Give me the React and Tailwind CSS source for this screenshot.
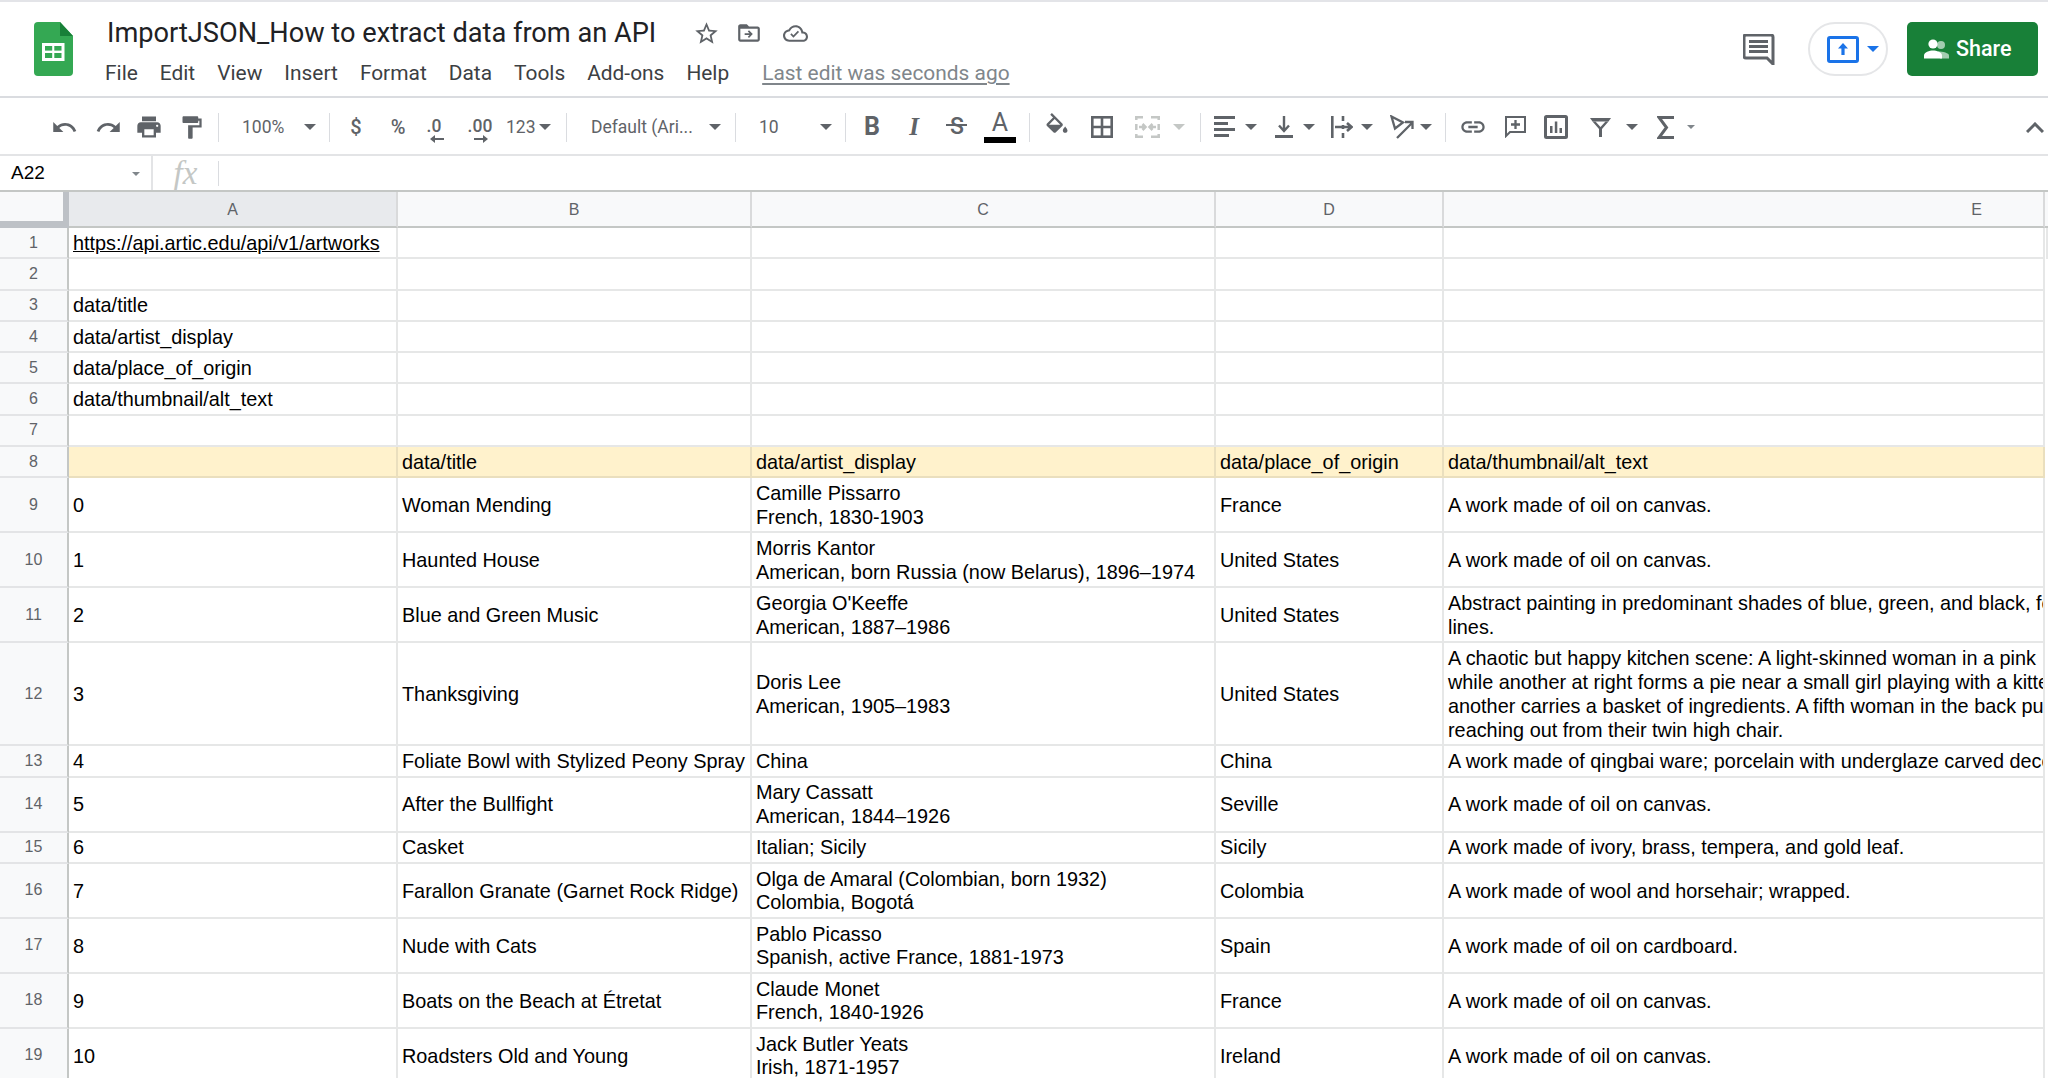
const G = "#5f6368";

function I({ children, w = 24, h = 24, vb = "0 0 24 24", cls = "" }) {
  return (
    <svg width={w} height={h} viewBox={vb} fill={G} className={cls}>
      {children}
    </svg>
  );
}

function Caret({ small, light, blue }) {
  const color = blue ? "border-t-[#1a73e8]" : light ? "border-t-[#c4c7c5]" : small ? "border-t-[#80868b]" : "border-t-[#5f6368]";
  const size = small
    ? "border-l-[4px] border-r-[4px] border-t-[4px]"
    : "border-l-[6px] border-r-[6px] border-t-[6px]";
  return <div className={`${size} border-l-transparent border-r-transparent ${color} shrink-0`} />;
}

function Sep() {
  return <div className="w-px h-[29px] bg-[#dadce0] shrink-0" />;
}

const menus = ["File", "Edit", "View", "Insert", "Format", "Data", "Tools", "Add-ons", "Help"];

function Logo() {
  return (
    <svg width="39" height="54" viewBox="0 0 39 54" className="shrink-0">
      <path d="M4 0H26L39 14V50a4 4 0 0 1-4 4H4a4 4 0 0 1-4-4V4a4 4 0 0 1 4-4z" fill="#34a853" />
      <path d="M26 0L39 14H26z" fill="#188038" />
      <rect x="8" y="21" width="22.5" height="18" fill="#fff" />
      <rect x="11" y="24" width="7.2" height="4.6" fill="#34a853" />
      <rect x="20.3" y="24" width="7.2" height="4.6" fill="#34a853" />
      <rect x="11" y="31" width="7.2" height="5" fill="#34a853" />
      <rect x="20.3" y="31" width="7.2" height="5" fill="#34a853" />
    </svg>
  );
}

function Header() {
  return (
    <div className="h-[96px] flex border-b-2 border-[#dadce0] bg-white">
      <div className="pl-[34px] pt-[20px] w-[106px] shrink-0">
        <Logo />
      </div>
      <div className="flex-1 flex flex-col">
        <div className="h-[48px] flex items-end">
          <span className="ml-[1px] text-[27.2px] leading-[34px] text-[#202124] font-['Roboto',sans-serif] whitespace-nowrap">
            ImportJSON_How to extract data from an API
          </span>
          <div className="flex items-center ml-[37px] h-[34px]">
            <I w={27} h={27}>
              <path d="M22 9.24l-7.19-.62L12 2 9.19 8.63 2 9.24l5.46 4.73L5.82 21 12 17.27 18.18 21l-1.63-7.03L22 9.24zM12 15.4l-3.76 2.27 1-4.28-3.32-2.88 4.38-.38L12 6.1l1.71 4.04 4.38.38-3.32 2.88 1 4.28L12 15.4z" />
            </I>
            <I w={26} h={26} cls="ml-[16px]">
              <path d="M20 6h-8l-2-2H4c-1.1 0-2 .9-2 2v12c0 1.1.9 2 2 2h16c1.1 0 2-.9 2-2V8c0-1.1-.9-2-2-2zm0 12H4V8h16v10z" />
              <path d="M12 9.5l3.5 3.5-3.5 3.5-1.1-1.1 1.6-1.6H8v-1.6h4.5l-1.6-1.6z" />
            </I>
            <I w={25} h={25} cls="ml-[21px]">
              <path d="M19.35 10.04C18.67 6.59 15.64 4 12 4 9.11 4 6.6 5.64 5.35 8.04 2.34 8.36 0 10.91 0 14c0 3.31 2.69 6 6 6h13c2.76 0 5-2.24 5-5 0-2.64-2.05-4.78-4.65-4.96zM19 18H6c-2.21 0-4-1.79-4-4 0-2.05 1.53-3.76 3.56-3.97l1.07-.11.5-.95C8.08 7.14 9.94 6 12 6c2.62 0 4.88 1.86 5.39 4.43l.3 1.5 1.53.11c1.56.1 2.78 1.41 2.78 2.96 0 1.65-1.35 3-3 3z" />
              <path d="M10 16l-3-3 1.2-1.2 1.8 1.8 4.2-4.2 1.2 1.2z" />
            </I>
          </div>
        </div>
        <div className="flex items-center h-[36px] mt-[6px] -ml-[1px] gap-[22px] text-[20.9px] text-[#3c4043] font-['Roboto',sans-serif] whitespace-nowrap">
          {menus.map((m) => (
            <span key={m}>{m}</span>
          ))}
          <span className="ml-[11px] text-[#80868b] underline underline-offset-[3px]">Last edit was seconds ago</span>
        </div>
      </div>
      <div className="flex items-start pt-[20px] pr-[10px] shrink-0">
        <svg width="32" height="31" viewBox="0 0 32 31" className="mt-[12px] mr-[33px]">
          <path d="M3 1H28a2 2 0 0 1 2 2V30L24 24H3a2 2 0 0 1-2-2V3a2 2 0 0 1 2-2z" fill="none" stroke={G} strokeWidth="3" />
          <rect x="6" y="6" width="19" height="3" fill={G} />
          <rect x="6" y="11" width="19" height="3" fill={G} />
          <rect x="6" y="16" width="19" height="3" fill={G} />
        </svg>
        <div className="w-[80px] h-[54px] rounded-[27px] border-2 border-[#e5e6e8] flex items-center pl-[17px] gap-[8px] mr-[19px]">
          <svg width="32" height="27" viewBox="0 0 32 27">
            <rect x="1.5" y="1.5" width="29" height="24" rx="1.5" fill="none" stroke="#1a73e8" strokeWidth="3" />
            <path d="M16 7l5 5.5h-3.4V19h-3.2v-6.5H11z" fill="#1a73e8" />
          </svg>
          <Caret blue />
        </div>
        <div className="w-[131px] h-[54px] rounded-[5px] bg-[#188038] flex items-center pl-[17px] gap-[7px] text-white text-[21.5px] font-medium font-['Roboto',sans-serif]">
          <svg width="25" height="20" viewBox="0 0 25 20">
            <circle cx="17" cy="6" r="4" fill="#a3cdb0" />
            <path d="M14 12.5c5 0 11 1.500 11 4v3H16z" fill="#a3cdb0" />
            <circle cx="9" cy="5" r="4.600" fill="#fff" />
            <path d="M0 19.500v-3c0-3.200 5.500-5 9-5s9 1.800 9 5v3z" fill="#fff" />
          </svg>
          <span>Share</span>
        </div>
      </div>
    </div>
  );
}

function Box({ cls, children }) {
  return <div className={`flex items-center justify-center shrink-0 ${cls}`}>{children}</div>;
}

const tbText = "text-[#5f6368] font-['Roboto',sans-serif] whitespace-nowrap";

function Toolbar() {
  return (
    <div className="h-[58px] flex items-center pl-[42px] pt-[2px] border-b-2 border-[#e3e4e6] bg-white">
      <Box cls="w-[44px]">
        <I w={27} h={27}><path d="M12.5 8c-2.65 0-5.05.99-6.9 2.6L2 7v9h9l-3.62-3.62c1.39-1.16 3.16-1.88 5.12-1.88 3.54 0 6.55 2.31 7.6 5.5l2.37-.78C21.08 11.03 17.15 8 12.5 8z" /></I>
      </Box>
      <Box cls="w-[44px]">
        <I w={27} h={27}><path d="M18.4 10.6C16.55 8.99 14.15 8 11.5 8c-4.65 0-8.58 3.03-9.96 7.22L3.9 16c1.05-3.19 4.05-5.5 7.6-5.5 1.95 0 3.73.72 5.12 1.88L13 16h9V7l-3.6 3.6z" /></I>
      </Box>
      <Box cls="w-[38px]">
        <I w={28} h={28}><path d="M19 8H5c-1.66 0-3 1.34-3 3v6h4v4h12v-4h4v-6c0-1.66-1.34-3-3-3zm-3 11H8v-5h8v5zm3-7c-.55 0-1-.45-1-1s.45-1 1-1 1 .45 1 1-.45 1-1 1zm-1-9H6v4h12V3z" /></I>
      </Box>
      <Box cls="w-[46px]">
        <I w={27} h={27}><path d="M18 4V3c0-.55-.45-1-1-1H5c-.55 0-1 .45-1 1v4c0 .55.45 1 1 1h12c.55 0 1-.45 1-1V6h1v4H9v11c0 .55.45 1 1 1h2c.55 0 1-.45 1-1v-9h8V4h-3z" /></I>
      </Box>
      <div className="w-[4px] shrink-0" />
      <Sep />
      <div className={`w-[110px] shrink-0 flex items-center justify-between pl-[23px] pr-[13px] text-[17.5px] ${tbText}`}>
        <span>100%</span>
        <Caret />
      </div>
      <Sep />
      <Box cls={`w-[52px] text-[20px] font-medium ${tbText}`}>$</Box>
      <Box cls={`w-[32px] text-[20px] font-medium ${tbText}`}>%</Box>
      <Box cls={`w-[40px] relative text-[17.5px] font-medium ${tbText}`}>
        <span className="-mt-[2px]">.0</span>
        <svg width="14" height="8" viewBox="0 0 14 8" className="absolute left-[16px] top-[20px]">
          <path d="M0 4l5-4v3h9v2H5v3z" fill={G} />
        </svg>
      </Box>
      <Box cls={`w-[52px] relative text-[17.5px] font-medium ${tbText}`}>
        <span className="-mt-[2px]">.00</span>
        <svg width="14" height="8" viewBox="0 0 14 8" className="absolute left-[20px] top-[20px]">
          <path d="M14 4L9 0v3H0v2h9v3z" fill={G} />
        </svg>
      </Box>
      <div className={`w-[60px] shrink-0 flex items-center gap-[3px] text-[17.5px] ${tbText}`}>
        <span>123</span>
        <Caret />
      </div>
      <Sep />
      <div className={`w-[168px] shrink-0 flex items-center justify-between pl-[24px] pr-[14px] text-[17.5px] ${tbText}`}>
        <span>Default (Ari...</span>
        <Caret />
      </div>
      <Sep />
      <div className={`w-[109px] shrink-0 flex items-center justify-between pl-[23px] pr-[13px] text-[17.5px] ${tbText}`}>
        <span>10</span>
        <Caret />
      </div>
      <Sep />
      <Box cls={`w-[52px] text-[25px] font-bold ${tbText}`}>B</Box>
      <Box cls="w-[32px] text-[25px] font-bold italic text-[#5f6368] font-['Liberation_Serif',serif]">I</Box>
      <Box cls={`w-[54px] relative text-[23px] font-medium ${tbText}`}>
        <span>S</span>
        <div className="absolute left-[16px] top-[14px] w-[21px] h-[2px] bg-[#5f6368]" />
      </Box>
      <div className="w-[32px] shrink-0 flex flex-col items-center h-[36px] mt-[2px]">
        <span className={`text-[25px] leading-[26px] ${tbText}`}>A</span>
        <div className="w-[32px] h-[6px] mt-[1px] bg-black" />
      </div>
      <div className="w-[13px] shrink-0" />
      <Sep />
      <Box cls="w-[54px]">
        <I w={28} h={28}>
          <path d="M16.56 8.94L7.62 0 6.21 1.41l2.38 2.38-5.15 5.15c-.59.59-.59 1.54 0 2.12l5.5 5.5c.29.29.68.44 1.06.44s.77-.15 1.06-.44l5.5-5.5c.59-.58.59-1.53 0-2.12zM5.210 10L10 5.21 14.79 10H5.21zM19 11.5s-2 2.17-2 3.500c0 1.1.9 2 2 2s2-.9 2-2c0-1.33-2-3.5-2-3.5z" />
        </I>
      </Box>
      <Box cls="w-[36px]">
        <svg width="22" height="22" viewBox="0 0 22 22" fill="none" stroke={G} strokeWidth="2.600">
          <rect x="1.300" y="1.300" width="19.400" height="19.400" />
          <path d="M11 1V21M1 11H21" />
        </svg>
      </Box>
      <Box cls="w-[54px]">
        <svg width="25" height="22" viewBox="0 0 25 22" fill="none" stroke="#c4c7c5" strokeWidth="2.500">
          <path d="M0 1.300H8M16 1.300H25M0 20.700H8M16 20.700H25M1.300 0V4M1.300 8V14M1.300 18V22M23.700 0V4M23.700 8V14M23.700 18V22M4 11H10M7.500 8L10.500 11L7.500 14M21 11H15M17.500 8L14.500 11L17.500 14" />
        </svg>
      </Box>
      <Box cls="w-[10px]"><Caret light /></Box>
      <div className="w-[16px] shrink-0" />
      <Sep />
      <Box cls="w-[28px] ml-[10px]">
        <svg width="22" height="22" viewBox="0 0 22 22" fill={G}>
          <rect x="0" y="0" width="21" height="3" />
          <rect x="0" y="6" width="14" height="3" />
          <rect x="0" y="12" width="21" height="3" />
          <rect x="0" y="18" width="15" height="3" />
        </svg>
      </Box>
      <Box cls="w-[12px] ml-[6px]"><Caret /></Box>
      <Box cls="w-[28px] ml-[13px]">
        <svg width="18" height="22" viewBox="0 0 18 22" fill="none" stroke={G} strokeWidth="2.400">
          <path d="M9 0V14M4 9.500L9 15L14 9.500" />
          <path d="M0 20.500H18" strokeWidth="3" />
        </svg>
      </Box>
      <Box cls="w-[12px] ml-[5px]"><Caret /></Box>
      <Box cls="w-[28px] ml-[13px]">
        <svg width="22" height="22" viewBox="0 0 22 22" fill="none" stroke={G} strokeWidth="2.600">
          <path d="M1.300 0V22M12 0V5M12 9V13M12 17V22M4 11H20M16 7L20.500 11L16 15" />
        </svg>
      </Box>
      <Box cls="w-[12px] ml-[5px]"><Caret /></Box>
      <Box cls="w-[28px] ml-[15px]">
        <svg width="24" height="24" viewBox="0 0 24 24" fill="none" stroke={G} strokeWidth="2.300">
          <path d="M1.500 1.500L13 7.500L5 13.500z" />
          <path d="M7 23L22 8M15 7H22.500V14" />
        </svg>
      </Box>
      <Box cls="w-[12px] ml-[4px]"><Caret /></Box>
      <div className="w-[13px] shrink-0" />
      <Sep />
      <Box cls="w-[28px] ml-[13px]">
        <I w={30} h={30}><path d="M3.900 12c0-1.710 1.390-3.100 3.100-3.100h4V7H7c-2.760 0-5 2.240-5 5s2.240 5 5 5h4v-1.900H7c-1.710 0-3.100-1.390-3.100-3.100zM8 13h8v-2H8v2zm9-6h-4v1.900h4c1.710 0 3.100 1.390 3.100 3.100s-1.390 3.100-3.100 3.100h-4V17h4c2.760 0 5-2.240 5-5s-2.240-5-5-5z" /></I>
      </Box>
      <Box cls="w-[28px] ml-[14px]">
        <svg width="21" height="22" viewBox="0 0 21 22" fill="none" stroke={G} strokeWidth="2">
          <path d="M1 1H20V16H5L1 20z" />
          <path d="M10.500 4V13M6 8.500H15" strokeWidth="2.300" />
        </svg>
      </Box>
      <Box cls="w-[28px] ml-[13px]">
        <svg width="24" height="24" viewBox="0 0 24 24">
          <rect x="1.500" y="1.500" width="21" height="21" rx="1" fill="none" stroke={G} strokeWidth="3" />
          <rect x="6" y="11" width="2.500" height="7" fill={G} />
          <rect x="10.800" y="6.500" width="2.500" height="11.500" fill={G} />
          <rect x="15.500" y="13" width="2.500" height="5" fill={G} />
        </svg>
      </Box>
      <Box cls="w-[28px] ml-[16px]">
        <svg width="21" height="19" viewBox="0 0 21 19" fill={G}>
          <path d="M0 0H21L18.500 3.500H2.500z" />
          <path d="M2.500 3.500L9 11V19H12V11L18.500 3.500H15.500L10.500 9L5.500 3.500z" />
        </svg>
      </Box>
      <Box cls="w-[12px] ml-[12px]"><Caret /></Box>
      <Box cls="w-[28px] ml-[13px]">
        <svg width="17" height="23" viewBox="0 0 17 23" fill="none" stroke={G} strokeWidth="3">
          <path d="M17 1.500H2L9.500 11.500L2 21.500H17" />
        </svg>
      </Box>
      <Box cls="w-[10px] ml-[7px]"><Caret small /></Box>
      <div className="ml-auto mr-[4px] shrink-0 w-[18px] flex justify-center">
        <svg width="18" height="11" viewBox="0 0 18 11" fill="none" stroke={G} strokeWidth="3">
          <path d="M1 10L9 2L17 10" />
        </svg>
      </div>
    </div>
  );
}

function FormulaBar() {
  return (
    <div className="h-[36px] flex bg-white border-b-2 border-[#c4c7c5] font-['Liberation_Sans',sans-serif]">
      <div className="w-[153px] shrink-0 flex items-center justify-between pl-[11px] pr-[11px] pt-[1px] border-r-2 border-[#e3e4e6] text-[19px] text-black">
        <span>A22</span>
        <Caret small />
      </div>
      <div className="w-[65px] shrink-0 flex items-center justify-center text-[33px] leading-none italic text-[#c4c7c5] font-['Liberation_Serif',serif]">
        fx
      </div>
      <div className="w-px h-[25px] mt-[5px] bg-[#dadce0]" />
    </div>
  );
}

const gridCols = "grid grid-cols-[69px_329px_354px_464px_228px_601px_3px]";

function ColumnHeader() {
  const base = "flex items-center justify-center pt-[1px] border-r-2 border-[#d9dadb] text-[16px] text-[#5f6368]";
  return (
    <div className={`${gridCols} h-[36px] bg-[#f8f9fa] font-['Liberation_Sans',sans-serif]`}>
      <div className="border-r-[6px] border-b-[7px] border-[#bdc1c6] bg-[#f8f9fa]" />
      <div className={`${base} bg-[#e8eaed] border-b-2 border-b-[#c4c7c5]`}>A</div>
      <div className={`${base} border-b-2 border-b-[#c4c7c5]`}>B</div>
      <div className={`${base} border-b-2 border-b-[#c4c7c5]`}>C</div>
      <div className={`${base} border-b-2 border-b-[#c4c7c5]`}>D</div>
      <div className="flex items-center justify-end pt-[1px] pr-[61px] border-r-2 border-[#d9dadb] border-b-2 border-b-[#c4c7c5] text-[16px] text-[#5f6368]">E</div>
      <div className="bg-[#f8f9fa] border-b-2 border-b-[#c4c7c5]" />
    </div>
  );
}

function Cell({ lines, yellow, link }) {
  const border = yellow ? "border-[#eadfbe]" : "border-[#e6e7e7]";
  return (
    <div className={`flex items-center pl-[4px] pt-[2px] overflow-hidden border-r-2 border-b-2 ${border}`}>
      <div className="min-w-0 text-[19.85px] leading-[23.8px] text-black">
        {(lines || []).map((l, i) => (
          <div key={i} className={`whitespace-nowrap ${link ? "underline" : ""}`}>{l}</div>
        ))}
      </div>
    </div>
  );
}

function Row({ n, h, cells = [], yellow, link }) {
  return (
    <div className={`${gridCols} ${h} ${yellow ? "bg-[#fff2cc]" : "bg-white"}`}>
      <div className="flex items-center justify-center bg-[#f8f9fa] border-r-[2px] border-r-[#c4c7c5] border-b-2 border-b-[#e3e4e6] text-[16px] text-[#5f6368]">
        {n}
      </div>
      {[0, 1, 2, 3, 4].map((i) => (
        <Cell key={i} lines={cells[i]} yellow={yellow} link={link && i === 0} />
      ))}
      <div className="bg-white relative">
        {n === 1 ? <div className="absolute left-[1px] top-0 w-[2px] h-[31px] bg-[#e6e7e7]" /> : null}
      </div>
    </div>
  );
}

const S = "h-[31.3px]";
const D = "h-[55px]";
const oil = ["A work made of oil on canvas."];

function Sheet() {
  return (
    <div className="font-['Liberation_Sans',sans-serif]">
      <ColumnHeader />
      <Row n={1} h={S} link cells={[["https://api.artic.edu/api/v1/artworks"]]} />
      <Row n={2} h={S} />
      <Row n={3} h={S} cells={[["data/title"]]} />
      <Row n={4} h={S} cells={[["data/artist_display"]]} />
      <Row n={5} h={S} cells={[["data/place_of_origin"]]} />
      <Row n={6} h={S} cells={[["data/thumbnail/alt_text"]]} />
      <Row n={7} h={S} />
      <Row n={8} h={S} yellow cells={[[], ["data/title"], ["data/artist_display"], ["data/place_of_origin"], ["data/thumbnail/alt_text"]]} />
      <Row n={9} h={D} cells={[["0"], ["Woman Mending"], ["Camille Pissarro", "French, 1830-1903"], ["France"], oil]} />
      <Row n={10} h={D} cells={[["1"], ["Haunted House"], ["Morris Kantor", "American, born Russia (now Belarus), 1896–1974"], ["United States"], oil]} />
      <Row n={11} h={D} cells={[["2"], ["Blue and Green Music"], ["Georgia O'Keeffe", "American, 1887–1986"], ["United States"], ["Abstract painting in predominant shades of blue, green, and black, featuring", "lines."]]} />
      <Row n={12} h="h-[103px]" cells={[["3"], ["Thanksgiving"], ["Doris Lee", "American, 1905–1983"], ["United States"], ["A chaotic but happy kitchen scene: A light-skinned woman in a pink", "while another at right forms a pie near a small girl playing with a kitten.", "another carries a basket of ingredients. A fifth woman in the back pulls", "reaching out from their twin high chair."]]} />
      <Row n={13} h={S} cells={[["4"], ["Foliate Bowl with Stylized Peony Spray"], ["China"], ["China"], ["A work made of qingbai ware; porcelain with underglaze carved decoration."]]} />
      <Row n={14} h={D} cells={[["5"], ["After the Bullfight"], ["Mary Cassatt", "American, 1844–1926"], ["Seville"], oil]} />
      <Row n={15} h={S} cells={[["6"], ["Casket"], ["Italian; Sicily"], ["Sicily"], ["A work made of ivory, brass, tempera, and gold leaf."]]} />
      <Row n={16} h={D} cells={[["7"], ["Farallon Granate (Garnet Rock Ridge)"], ["Olga de Amaral (Colombian, born 1932)", "Colombia, Bogotá"], ["Colombia"], ["A work made of wool and horsehair; wrapped."]]} />
      <Row n={17} h={D} cells={[["8"], ["Nude with Cats"], ["Pablo Picasso", "Spanish, active France, 1881-1973"], ["Spain"], ["A work made of oil on cardboard."]]} />
      <Row n={18} h={D} cells={[["9"], ["Boats on the Beach at Étretat"], ["Claude Monet", "French, 1840-1926"], ["France"], oil]} />
      <Row n={19} h={D} cells={[["10"], ["Roadsters Old and Young"], ["Jack Butler Yeats", "Irish, 1871-1957"], ["Ireland"], oil]} />
    </div>
  );
}

export default function App() {
  return (
    <div className="w-[2048px] h-[1078px] overflow-hidden bg-white border-t-2 border-[#e3e4e8]">
      <Header />
      <Toolbar />
      <FormulaBar />
      <Sheet />
    </div>
  );
}
